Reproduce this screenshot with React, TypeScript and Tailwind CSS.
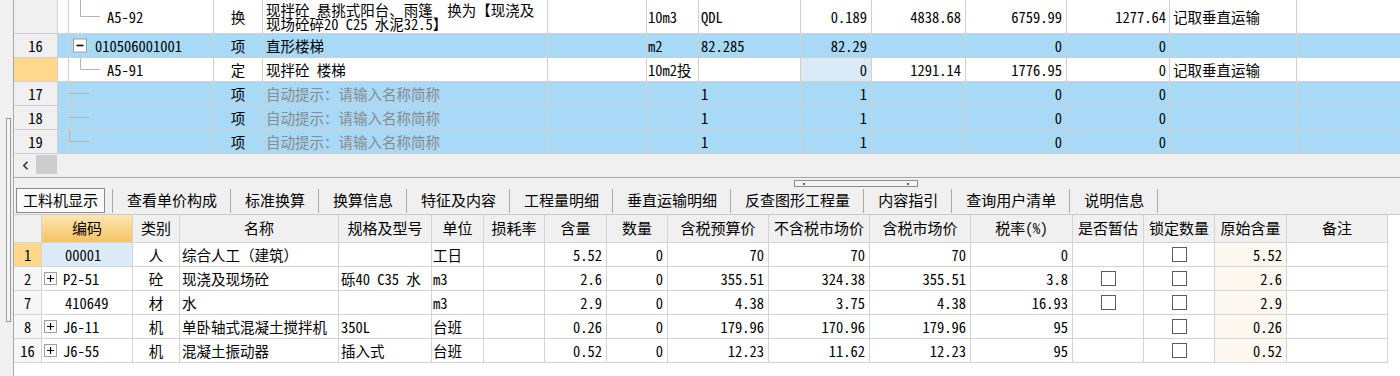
import type { ReactNode } from "react";

type TopRowData = {
  no: string;
  tall?: boolean;
  blue?: boolean;
  current?: boolean;
  tree: "child" | "parent" | "leaf" | "last";
  code?: string;
  type: string;
  name: ReactNode;
  hint?: boolean;
  unit?: string;
  qdl?: string;
  qty: string;
  qtyFocus?: boolean;
  c1?: string;
  c2: string;
  c3: string;
  note?: string;
};

const topRows: TopRowData[] = [
  {
    no: "",
    tall: true,
    tree: "child",
    code: "A5-92",
    type: "换",
    name: (
      <div className="text-[14.5px] leading-[14px] whitespace-pre">
        {"现拌砼 悬挑式阳台、雨篷  换为【现浇及\n现场砼碎20 C25 水泥32.5】"}
      </div>
    ),
    unit: "10m3",
    qdl: "QDL",
    qty: "0.189",
    c1: "4838.68",
    c2: "6759.99",
    c3: "1277.64",
    note: "记取垂直运输",
  },
  {
    no: "16",
    blue: true,
    tree: "parent",
    code: "010506001001",
    type: "项",
    name: "直形楼梯",
    unit: "m2",
    qdl: "82.285",
    qty: "82.29",
    c2: "0",
    c3: "0",
  },
  {
    no: "",
    current: true,
    tree: "child",
    code: "A5-91",
    type: "定",
    name: "现拌砼 楼梯",
    unit: "10m2投",
    qty: "0",
    qtyFocus: true,
    c1: "1291.14",
    c2: "1776.95",
    c3: "0",
    note: "记取垂直运输",
  },
  { no: "17", blue: true, tree: "leaf", type: "项", name: "自动提示：请输入名称简称", hint: true, qdl: "1", qty: "1", c2: "0", c3: "0" },
  { no: "18", blue: true, tree: "leaf", type: "项", name: "自动提示：请输入名称简称", hint: true, qdl: "1", qty: "1", c2: "0", c3: "0" },
  { no: "19", blue: true, tree: "last", type: "项", name: "自动提示：请输入名称简称", hint: true, qdl: "1", qty: "1", c2: "0", c3: "0" },
];

function TreeMark({ kind, h }: { kind: TopRowData["tree"]; h: number }) {
  const mid = Math.floor(h / 2) + 0.5;
  if (kind === "child") {
    return (
      <svg width="38" height={h} className="shrink-0">
        <path d={`M11.5 0 V${mid} H31`} stroke="#b4b4b4" fill="none" />
      </svg>
    );
  }
  if (kind === "parent") {
    return (
      <svg width="26" height={h} className="shrink-0">
        <rect x="4.5" y={mid - 6.5} width="13" height="13" fill="#fff" stroke="#a0a0a0" />
        <path d={`M7.5 ${mid} H14.5`} stroke="#000" strokeWidth="1.6" />
      </svg>
    );
  }
  return (
    <svg width="26" height={h} className="shrink-0">
      <path d={kind === "last" ? `M0.5 0 V${mid} H20` : `M0 ${mid} H20`} stroke="#b4b4b4" fill="none" />
    </svg>
  );
}

function TopRow({ r }: { r: TopRowData }) {
  const h = r.tall ? 33 : 23;
  return (
    <div
      className={`flex shrink-0 border-b border-[#d0d0d0] ${r.tall ? "h-[34px]" : "h-[24px]"} ${
        r.blue ? "bg-[#a8d9f7]" : "bg-white"
      }`}
    >
      <div
        className={`w-[44px] shrink-0 flex items-center justify-center border-r border-[#d0d0d0] ${
          r.current ? "bg-[#ffd88c]" : "bg-[#f0f0f0]"
        }`}
      >
        {r.no}
      </div>
      <div className="w-[11px] shrink-0 border-r border-[#d0d0d0]" />
      <div className="w-[145px] shrink-0 flex items-center border-r border-[#d0d0d0] overflow-hidden">
        <TreeMark kind={r.tree} h={h} />
        <span>{r.code}</span>
      </div>
      <div className="w-[49px] shrink-0 flex items-center justify-center border-r border-[#d0d0d0]">{r.type}</div>
      <div
        className={`w-[285px] shrink-0 flex items-center pl-[3px] border-r border-[#d0d0d0] overflow-hidden whitespace-nowrap ${
          r.hint ? "text-[#8a8a8a]" : ""
        }`}
      >
        {r.name}
      </div>
      <div className="w-[99px] shrink-0 border-r border-[#d0d0d0]" />
      <div className="w-[52px] shrink-0 flex items-center pl-[1px] border-r border-[#d0d0d0] whitespace-nowrap">{r.unit}</div>
      <div className="w-[102px] shrink-0 flex items-center pl-[2px] border-r border-[#d0d0d0]">{r.qdl}</div>
      <div
        className={`w-[71px] shrink-0 flex items-center justify-end pr-[4px] border-r border-[#d0d0d0] ${
          r.qtyFocus ? "bg-[#dbeaf7]" : ""
        }`}
      >
        {r.qty}
      </div>
      <div className="w-[94px] shrink-0 flex items-center justify-end pr-[4px] border-r border-[#d0d0d0]">{r.c1}</div>
      <div className="w-[101px] shrink-0 flex items-center justify-end pr-[4px] border-r border-[#d0d0d0]">{r.c2}</div>
      <div className="w-[103px] shrink-0 flex items-center justify-end pr-[3px] border-r border-[#d0d0d0]">{r.c3}</div>
      <div className="w-[127px] shrink-0 flex items-center pl-[3px] border-r border-[#d0d0d0] whitespace-nowrap">{r.note}</div>
      <div className="flex-1" />
    </div>
  );
}

const tabs = ["查看单价构成", "标准换算", "换算信息", "特征及内容", "工程量明细", "垂直运输明细", "反查图形工程量", "内容指引", "查询用户清单", "说明信息"];

type LowRow = {
  no: string;
  current?: boolean;
  plus?: boolean;
  code: string;
  type: string;
  name: string;
  spec?: string;
  unit: string;
  amt: string;
  qty: string;
  p1: string;
  p2: string;
  p3: string;
  tax: string;
  est?: boolean;
  orig: string;
};

const lowRows: LowRow[] = [
  { no: "1", current: true, code: "00001", type: "人", name: "综合人工（建筑）", unit: "工日", amt: "5.52", qty: "0", p1: "70", p2: "70", p3: "70", tax: "0", orig: "5.52" },
  { no: "2", plus: true, code: "P2-51", type: "砼", name: "现浇及现场砼", spec: "砾40 C35 水", unit: "m3", amt: "2.6", qty: "0", p1: "355.51", p2: "324.38", p3: "355.51", tax: "3.8", est: true, orig: "2.6" },
  { no: "7", code: "410649", type: "材", name: "水", unit: "m3", amt: "2.9", qty: "0", p1: "4.38", p2: "3.75", p3: "4.38", tax: "16.93", est: true, orig: "2.9" },
  { no: "8", plus: true, code: "J6-11", type: "机", name: "单卧轴式混凝土搅拌机", spec: "350L", unit: "台班", amt: "0.26", qty: "0", p1: "179.96", p2: "170.96", p3: "179.96", tax: "95", orig: "0.26" },
  { no: "16", plus: true, code: "J6-55", type: "机", name: "混凝土振动器", spec: "插入式", unit: "台班", amt: "0.52", qty: "0", p1: "12.23", p2: "11.62", p3: "12.23", tax: "95", orig: "0.52" },
];

function Check() {
  return <div className="w-[15px] h-[15px] border border-[#5c5c5c] bg-white" />;
}

function PlusBox() {
  return (
    <svg width="13" height="13" className="shrink-0">
      <rect x="0.5" y="0.5" width="12" height="12" fill="#fff" stroke="#a0a0a0" />
      <path d="M3 6.5 H10 M6.5 3 V10" stroke="#000" strokeWidth="1.2" />
    </svg>
  );
}

function LowTableRow({ r }: { r: LowRow }) {
  return (
    <div className="flex h-[24px] shrink-0 bg-white">
      <div
        className={`w-[28px] shrink-0 flex items-center justify-center border-r border-b border-[#d4d4d4] ${
          r.current ? "bg-[#ffd88c]" : "bg-[#f7f7f7]"
        }`}
      >
        {r.no}
      </div>
      <div
        className={`w-[91px] shrink-0 flex items-center border-r border-b border-[#d4d4d4] ${
          r.current ? "bg-[#dcebf8]" : ""
        } ${r.plus ? "pl-[2px]" : "pl-[23px]"}`}
      >
        {r.plus && <PlusBox />}
        <span className={r.plus ? "ml-[6px]" : ""}>{r.code}</span>
      </div>
      <div className="w-[47px] shrink-0 flex items-center justify-center border-r border-b border-[#d4d4d4]">{r.type}</div>
      <div className="w-[159px] shrink-0 flex items-center pl-[2px] border-r border-b border-[#d4d4d4] whitespace-nowrap overflow-hidden">{r.name}</div>
      <div className="w-[93px] shrink-0 flex items-center pl-[2px] border-r border-b border-[#d4d4d4] whitespace-pre overflow-hidden">{r.spec}</div>
      <div className="w-[52px] shrink-0 flex items-center pl-[1px] border-r border-b border-[#d4d4d4]">{r.unit}</div>
      <div className="w-[61px] shrink-0 border-r border-b border-[#d4d4d4]" />
      <div className="w-[62px] shrink-0 flex items-center justify-end pr-[4px] border-r border-b border-[#d4d4d4]">{r.amt}</div>
      <div className="w-[61px] shrink-0 flex items-center justify-end pr-[4px] border-r border-b border-[#d4d4d4]">{r.qty}</div>
      <div className="w-[101px] shrink-0 flex items-center justify-end pr-[4px] border-r border-b border-[#d4d4d4]">{r.p1}</div>
      <div className="w-[101px] shrink-0 flex items-center justify-end pr-[4px] border-r border-b border-[#d4d4d4]">{r.p2}</div>
      <div className="w-[101px] shrink-0 flex items-center justify-end pr-[4px] border-r border-b border-[#d4d4d4]">{r.p3}</div>
      <div className="w-[102px] shrink-0 flex items-center justify-end pr-[4px] border-r border-b border-[#d4d4d4]">{r.tax}</div>
      <div className="w-[71px] shrink-0 flex items-center justify-center border-r border-b border-[#d4d4d4]">{r.est && <Check />}</div>
      <div className="w-[71px] shrink-0 flex items-center justify-center border-r border-b border-[#d4d4d4]">
        <Check />
      </div>
      <div className="w-[72px] shrink-0 flex items-center justify-end pr-[4px] border-r border-b border-[#d4d4d4] bg-[#fdf8ef]">{r.orig}</div>
      <div className="w-[101px] shrink-0 border-r border-b border-[#d4d4d4]" />
    </div>
  );
}

const heads: { t: string; w: string }[] = [
  { t: "类别", w: "w-[47px]" },
  { t: "名称", w: "w-[159px]" },
  { t: "规格及型号", w: "w-[93px]" },
  { t: "单位", w: "w-[52px]" },
  { t: "损耗率", w: "w-[61px]" },
  { t: "含量", w: "w-[62px]" },
  { t: "数量", w: "w-[61px]" },
  { t: "含税预算价", w: "w-[101px]" },
  { t: "不含税市场价", w: "w-[101px]" },
  { t: "含税市场价", w: "w-[101px]" },
  { t: "税率(%)", w: "w-[102px]" },
  { t: "是否暂估", w: "w-[71px]" },
  { t: "锁定数量", w: "w-[71px]" },
  { t: "原始含量", w: "w-[72px]" },
  { t: "备注", w: "w-[101px]" },
];

export default function App() {
  return (
    <div className="w-[1400px] h-[376px] overflow-hidden flex bg-[#f0f0f0] text-black text-[14.5px] font-['Noto_Sans_Mono_CJK_SC','Noto_Sans_CJK_SC',sans-serif]">
      {/* left pane edge */}
      <div className="w-[14px] shrink-0 border-r border-[#a8a8a8] pt-[118px] pl-[6px]">
        <div className="w-[5px] h-[204px] border border-[#9a9a9a] bg-[#f7f7f7]" />
      </div>

      <div className="flex-1 flex flex-col min-w-0">
        {/* upper grid */}
        <div className="flex flex-col">
          {topRows.map((r, i) => (
            <TopRow key={i} r={r} />
          ))}
        </div>

        {/* horizontal scrollbar */}
        <div className="h-[24px] shrink-0 flex border-b border-[#a8a8a8]">
          <div className="w-[22px] flex items-center justify-center">
            <svg width="7" height="9">
              <path d="M5.5 0.8 L1.8 4.5 L5.5 8.2" stroke="#333" strokeWidth="1.6" fill="none" />
            </svg>
          </div>
          <div className="w-[21px] h-[19px] mt-[1px] bg-[#cdcdcd]" />
        </div>

        {/* splitter */}
        <div className="h-[9px] shrink-0 pt-[2px]">
          <div className="ml-[780px] w-[124px] h-[7px] border border-[#8c8c8c] bg-[#f4f4f4] flex items-center justify-between px-[8px]">
            <div className="w-[2px] h-[2px] bg-[#4060c0]" />
            <div className="w-[2px] h-[2px] bg-[#4060c0]" />
          </div>
        </div>

        {/* tabs */}
        <div className="h-[27px] shrink-0 flex items-center text-[15px]">
          <div className="ml-[2px] h-[25px] px-[6px] flex items-center border border-[#8a8a8a] bg-[#fafafa]">工料机显示</div>
          <div className="ml-[7px] w-px h-[24px] bg-[#a9a9a9]" />
          {tabs.map((t) => (
            <div key={t} className="flex items-center">
              <div className="pl-[14px] pr-[13px]">{t}</div>
              <div className="w-px h-[24px] bg-[#a9a9a9]" />
            </div>
          ))}
        </div>

        {/* lower grid */}
        <div className="flex-1 bg-white border-t border-[#c8c8c8] flex flex-col">
          <div className="h-[28px] shrink-0 flex text-[15px]">
            <div className="w-[28px] shrink-0 border-r border-b border-[#d4d4d4] bg-[#f0f0f0]" />
            <div className="w-[91px] shrink-0 flex items-center justify-center border-r border-b border-[#d4d4d4] bg-gradient-to-b from-[#fde6b2] to-[#f5c362]">
              编码
            </div>
            {heads.map((h) => (
              <div
                key={h.t}
                className={`${h.w} shrink-0 flex items-center justify-center border-r border-b border-[#d4d4d4] bg-[#f0f0f0] whitespace-nowrap`}
              >
                {h.t}
              </div>
            ))}
          </div>
          {lowRows.map((r) => (
            <LowTableRow key={r.no} r={r} />
          ))}
        </div>
      </div>
    </div>
  );
}
